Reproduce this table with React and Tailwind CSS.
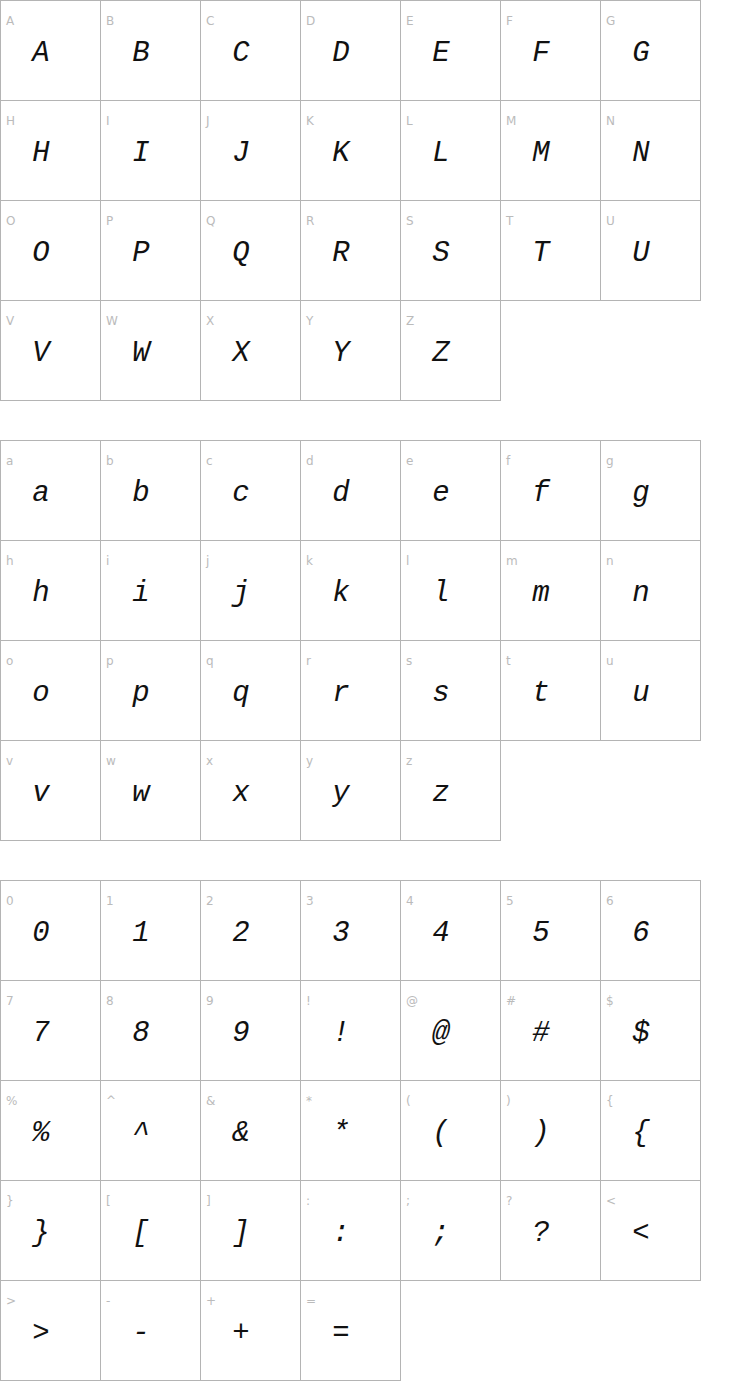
import React from "react";

const upper = "ABCDEFGHIJKLMNOPQRSTUVWXYZ".split("");
const lower = "abcdefghijklmnopqrstuvwxyz".split("");
// order as in the chart
const numSym = [
  "0", "1", "2", "3", "4", "5", "6",
  "7", "8", "9", "!", "@", "#", "$",
  "%", "^", "&", "*", "(", ")", "{",
  "}", "[", "]", ":", ";", "?", "<",
  ">", "-", "+", "=",
];

const Cell = ({ ch }) => (
  <div className="w-[101px] h-[101px] border border-[#b4b4b4] -mr-px -mb-px bg-white">
    <div className="pl-[5px] pt-[14px] text-[12px] leading-[12px] text-[#bbbbbb] font-['DejaVu_Sans',sans-serif]">
      {ch}
    </div>
    <div className="mt-[12px] w-[80px] text-center text-[29px] leading-[30px] italic text-[#111] font-['Liberation_Mono',monospace]">
      {ch}
    </div>
  </div>
);

const Block = ({ chars, className }) => (
  <div className={"flex flex-wrap w-[701px] " + (className || "")}>
    {chars.map((c, i) => (
      <Cell key={i} ch={c} />
    ))}
  </div>
);

export default function App() {
  return (
    <div className="w-[740px] min-h-[1400px] bg-white">
      <Block chars={upper} />
      <Block chars={lower} className="mt-[40px]" />
      <Block chars={numSym} className="mt-[40px]" />
    </div>
  );
}
